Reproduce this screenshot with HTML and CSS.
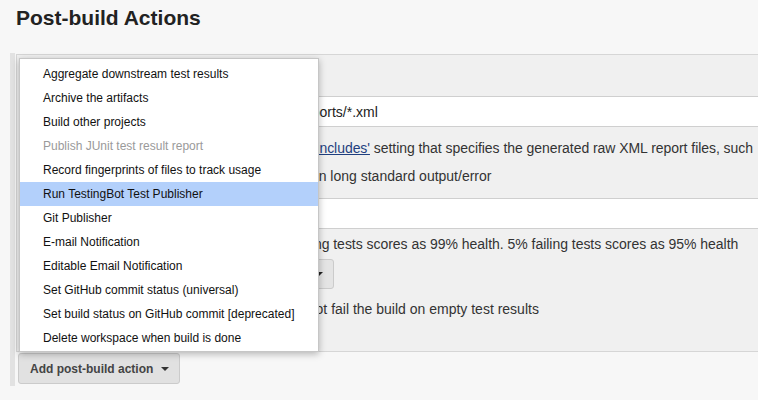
FILE: index.html
```html
<!DOCTYPE html>
<html>
<head>
<meta charset="utf-8">
<link rel="stylesheet" href="styles.css">
</head>
<body>
<h1 class="title">Post-build Actions</h1>
<div class="section">
  <div class="panel">
    <div class="row head"><div class="label"></div><div></div></div>
    <div class="row field">
      <div class="label"></div>
      <div class="control"><div class="input">test-reports/*.xml</div></div>
    </div>
    <div class="row desc">
      <div></div>
      <div class="text">Fileset <a href="#" class="link">'includes'</a> setting that specifies the generated raw XML report files, such</div>
    </div>
    <div class="row check">
      <div></div>
      <div class="text"><span class="box"></span>Retain long standard output/error</div>
    </div>
    <div class="row field">
      <div class="label"></div>
      <div class="control"><div class="input"></div></div>
    </div>
    <div class="row desc2">
      <div></div>
      <div class="text">1% failing tests scores as 99% health. 5% failing tests scores as 95% health</div>
    </div>
    <div class="row addrow">
      <div class="label"></div>
      <div><span class="smallbtn">Add<span class="caret dark"></span></span></div>
    </div>
    <div class="row check last">
      <div></div>
      <div class="text"><span class="box"></span>Do not fail the build on empty test results</div>
    </div>
  </div>
  <div class="actions">
    <span class="bigbtn">Add post-build action<span class="caret"></span></span>
  </div>
  <ul class="menu">
    <li>Aggregate downstream test results</li>
    <li>Archive the artifacts</li>
    <li>Build other projects</li>
    <li class="disabled">Publish JUnit test result report</li>
    <li>Record fingerprints of files to track usage</li>
    <li class="active">Run TestingBot Test Publisher</li>
    <li>Git Publisher</li>
    <li>E-mail Notification</li>
    <li>Editable Email Notification</li>
    <li>Set GitHub commit status (universal)</li>
    <li>Set build status on GitHub commit [deprecated]</li>
    <li>Delete workspace when build is done</li>
  </ul>
</div>
</body>
</html>
```

FILE: styles.css
```css
html, body {
  margin: 0;
  padding: 0;
  background: #f7f7f7;
  overflow: hidden;
  font-family: "Liberation Sans", Arial, sans-serif;
  color: #333;
}
.title {
  margin: 6px 0 0 16px;
  font-size: 21px;
  line-height: 24px;
  font-weight: bold;
  color: #222;
}
.section {
  position: relative;
  margin: 23px 0 0 10px;
  border-left: 5px solid #e2e2e2;
  padding: 1px 0 2px 1px;
  width: 900px;
}
.panel {
  background: #f0f0f0;
  border: 1px solid #d6d6d6;
  border-right: none;
}
.row {
  display: grid;
  grid-template-columns: 252px 1fr;
  align-items: start;
  font-size: 14px;
  line-height: 16px;
}
.label { color: #333; padding-left: 8px; }
.head { height: 41px; }
.field { height: 31px; }
.input {
  box-sizing: border-box;
  height: 31px;
  margin-left: -2px;
  background: #fff;
  border-top: 1px solid #cfcfcf;
  border-bottom: 1px solid #cfcfcf;
  border-left: 1px solid #cfcfcf;
  padding: 7px 0 0 4px;
  color: #222;
}
.text { white-space: nowrap; }
.desc { height: 34px; }
.desc .text { padding-top: 13px; letter-spacing: -0.05px; }
.check { height: 37px; }
.check .text { padding-top: 7px; display: flex; align-items: center; gap: 4px; }
.desc2 { height: 30px; }
.desc2 .text { padding-top: 7px; letter-spacing: -0.03px; }
.box {
  display: inline-block;
  box-sizing: border-box;
  width: 13px;
  height: 13px;
  border: 1px solid #aaa;
  border-radius: 2px;
  background: #fff;
}
.link { color: #1f3f7f; }
.addrow { height: 30px; }
.smallbtn {
  display: inline-flex;
  align-items: center;
  box-sizing: border-box;
  height: 30px;
  padding: 0 10px;
  background: #e4e4e4;
  border: 1px solid #cbcbcb;
  border-radius: 3px;
  font-weight: bold;
  color: #333;
}
.check.last { height: 62px; }
.last .text { padding-top: 12px; }
.actions { padding: 1px 0 0 2px; }
.bigbtn {
  display: inline-flex;
  align-items: center;
  box-sizing: border-box;
  height: 31px;
  padding: 0 10px 0 11px;
  background: #e1e1e1;
  border: 1px solid #cbcbcb;
  border-radius: 3px;
  font-weight: bold;
  font-size: 12px;
  color: #444;
}
.caret {
  display: inline-block;
  width: 0;
  height: 0;
  margin-left: 8px;
  border-left: 4px solid transparent;
  border-right: 4px solid transparent;
  border-top: 4px solid #333;
}
.caret.dark { border-top-color: #222; }
.menu {
  position: absolute;
  left: 4px;
  top: 5px;
  width: 298px;
  margin: 0;
  padding: 3px 0 1px 0;
  list-style: none;
  background: #fff;
  border: 1px solid #c6c6c6;
  box-shadow: 0 2px 7px rgba(0, 0, 0, 0.28);
  font-size: 12px;
  color: #111;
}
.menu li {
  height: 24px;
  line-height: 24px;
  padding-left: 23px;
  white-space: nowrap;
}
.menu li.disabled { color: #9a9a9a; }
.menu li.active { background: #b3d0fb; }
```
